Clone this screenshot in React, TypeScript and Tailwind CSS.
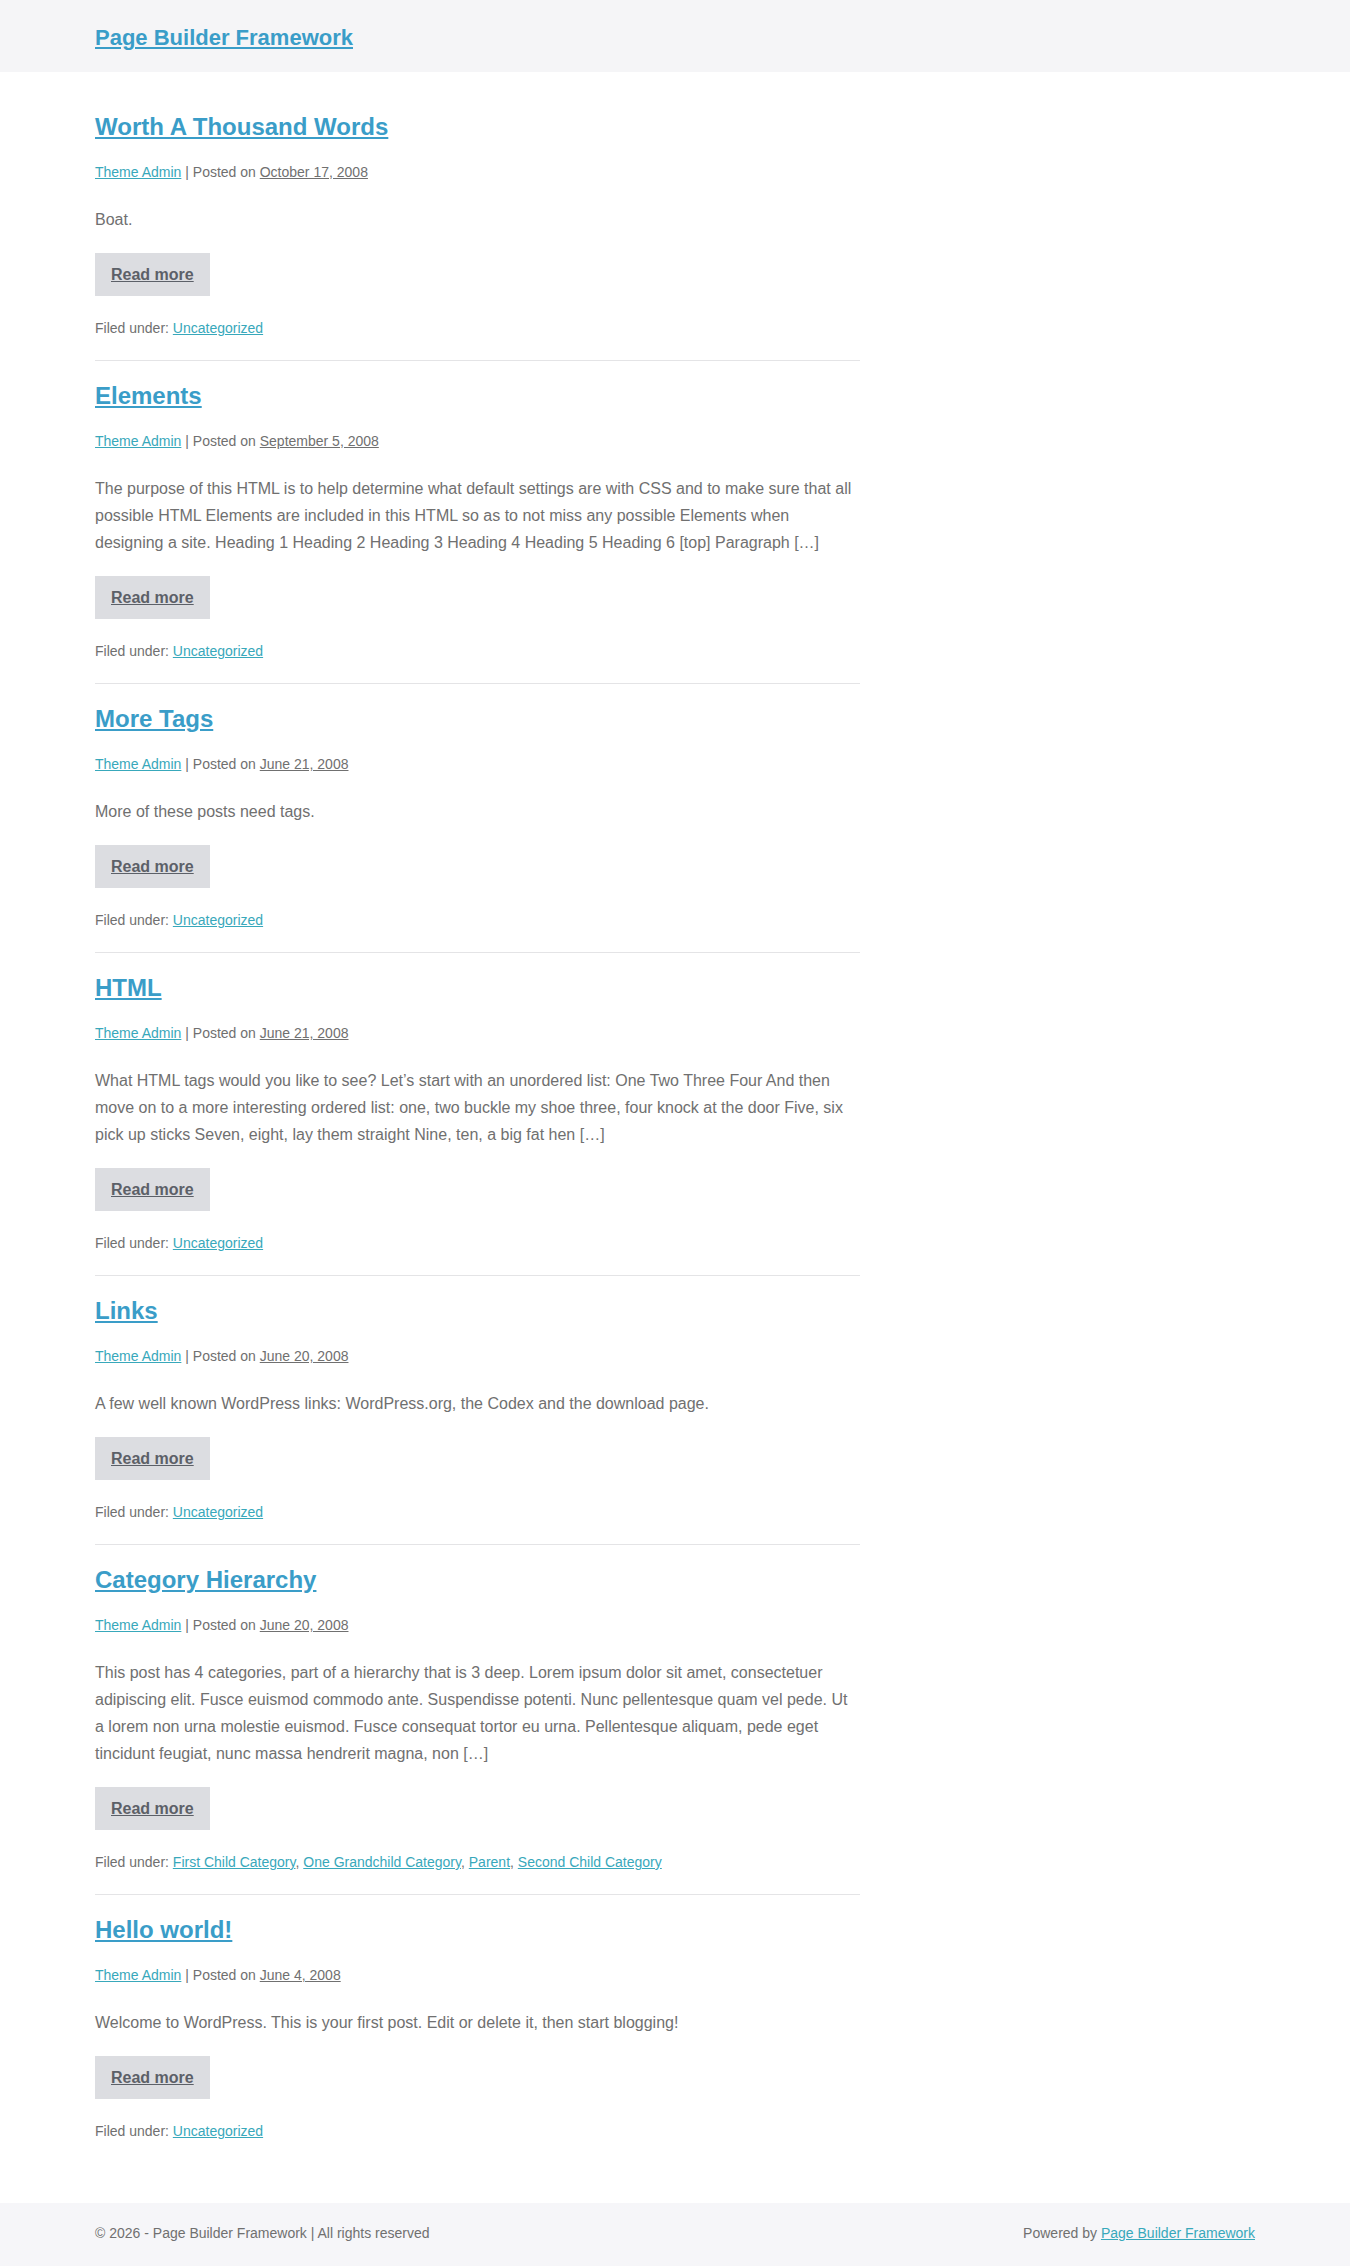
const posts = [
  {
    title: "Worth A Thousand Words",
    date: "October 17, 2008",
    excerpt: "Boat.",
    cats: ["Uncategorized"],
  },
  {
    title: "Elements",
    date: "September 5, 2008",
    excerpt:
      "The purpose of this HTML is to help determine what default settings are with CSS and to make sure that all possible HTML Elements are included in this HTML so as to not miss any possible Elements when designing a site. Heading 1 Heading 2 Heading 3 Heading 4 Heading 5 Heading 6 [top] Paragraph […]",
    cats: ["Uncategorized"],
  },
  {
    title: "More Tags",
    date: "June 21, 2008",
    excerpt: "More of these posts need tags.",
    cats: ["Uncategorized"],
  },
  {
    title: "HTML",
    date: "June 21, 2008",
    excerpt:
      "What HTML tags would you like to see? Let’s start with an unordered list: One Two Three Four And then move on to a more interesting ordered list: one, two buckle my shoe three, four knock at the door Five, six pick up sticks Seven, eight, lay them straight Nine, ten, a big fat hen […]",
    cats: ["Uncategorized"],
  },
  {
    title: "Links",
    date: "June 20, 2008",
    excerpt: "A few well known WordPress links: WordPress.org, the Codex and the download page.",
    cats: ["Uncategorized"],
  },
  {
    title: "Category Hierarchy",
    date: "June 20, 2008",
    excerpt:
      "This post has 4 categories, part of a hierarchy that is 3 deep. Lorem ipsum dolor sit amet, consectetuer adipiscing elit. Fusce euismod commodo ante. Suspendisse potenti. Nunc pellentesque quam vel pede. Ut a lorem non urna molestie euismod. Fusce consequat tortor eu urna. Pellentesque aliquam, pede eget tincidunt feugiat, nunc massa hendrerit magna, non […]",
    cats: ["First Child Category", "One Grandchild Category", "Parent", "Second Child Category"],
  },
  {
    title: "Hello world!",
    date: "June 4, 2008",
    excerpt: "Welcome to WordPress. This is your first post. Edit or delete it, then start blogging!",
    cats: ["Uncategorized"],
  },
];

export default function App() {
  return (
    <div className="min-h-screen bg-white text-[#707070]" style={{ fontFamily: '"Liberation Sans", Arial, sans-serif' }}>
      {/* Header */}
      <header className="bg-[#f5f5f7]">
        <div className="max-w-[1160px] mx-auto pt-[22px] pb-[18px]">
          <a href="#" className="text-[22px] leading-[32px] font-bold text-[#3a9dc8] underline">
            Page Builder Framework
          </a>
        </div>
      </header>

      {/* Posts */}
      <main className="max-w-[1160px] mx-auto pt-10 pb-10">
        <div className="w-[765px]">
          {posts.map((post, i) => (
            <article
              key={post.title}
              className={`pb-5 ${i > 0 ? "pt-5" : ""} ${i < posts.length - 1 ? "border-b border-[#e4e4e6]" : ""}`}
            >
              <h2 className="text-[24px] leading-[30px] font-bold mb-[18px]">
                <a href="#" className="text-[#3a9dc8] underline">
                  {post.title}
                </a>
              </h2>
              <p className="text-[14px] leading-6 mb-[22px]">
                <a href="#" className="text-[#38a8bb] underline">
                  Theme Admin
                </a>{" "}
                | Posted on{" "}
                <a href="#" className="text-[#707070] underline">
                  {post.date}
                </a>
              </p>
              <p className="text-[16px] leading-[27px] mb-5">{post.excerpt}</p>
              <a
                href="#"
                className="inline-block bg-[#dcdde1] px-4 py-2 text-[16px] leading-[27px] font-bold text-[#5c6068] underline mb-5"
              >
                Read more
              </a>
              <p className="text-[14px] leading-6">
                Filed under:{" "}
                {post.cats.map((c, j) => (
                  <span key={c}>
                    <a href="#" className="text-[#38a8bb] underline">
                      {c}
                    </a>
                    {j < post.cats.length - 1 ? ", " : ""}
                  </span>
                ))}
              </p>
            </article>
          ))}
        </div>
      </main>

      {/* Footer */}
      <footer className="bg-[#f6f6f9]">
        <div className="max-w-[1160px] mx-auto pt-[18px] pb-[22px] flex justify-between text-[14px] leading-6">
          <span>© 2026 - Page Builder Framework | All rights reserved</span>
          <span>
            Powered by{" "}
            <a href="#" className="text-[#38a8bb] underline">
              Page Builder Framework
            </a>
          </span>
        </div>
      </footer>
    </div>
  );
}
